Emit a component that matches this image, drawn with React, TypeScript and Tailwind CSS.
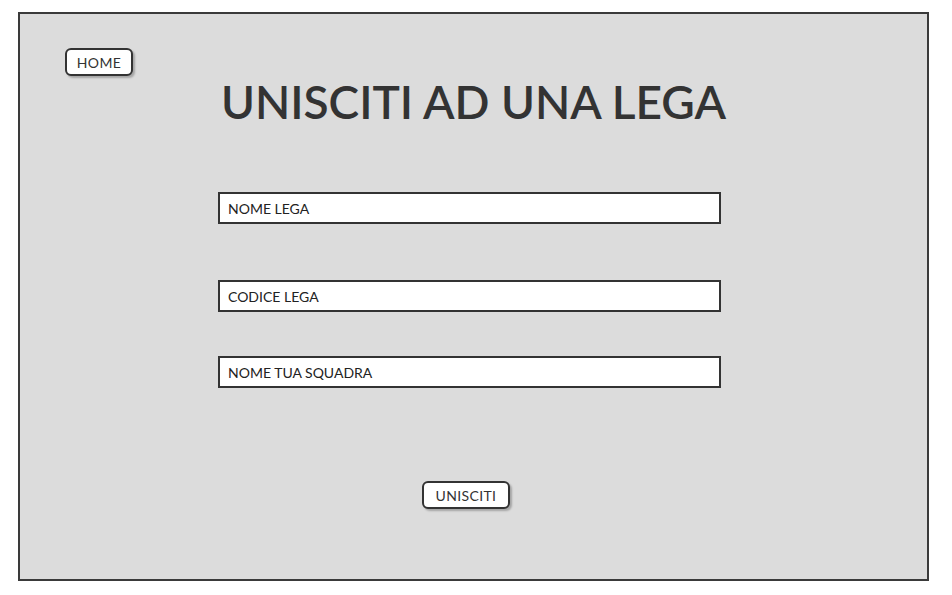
export default function App() {
  const font = { fontFamily: "Lato, 'Open Sans', sans-serif" };
  return (
    <div className="w-[952px] h-[595px] bg-white pt-[12px] pl-[18px]" style={font}>
      <div className="relative w-[911px] h-[569px] bg-[#dcdcdc] border-2 border-[#3a3a3a] flex flex-col">
        <div className="ml-[45px] mt-[34px] w-[68px] h-[28px] rounded-[6px] border-2 border-[#333] bg-white shadow-[2px_2px_2px_rgba(0,0,0,0.25)] flex items-center justify-center text-[14px] text-[#333] tracking-wide">
          HOME
        </div>
        <div className="mt-[2px] h-[48px] flex items-center justify-center text-[46px] leading-none text-[#333] font-semibold">
          UNISCITI AD UNA LEGA
        </div>
        <div className="ml-[198px] mt-[66px] w-[503px] h-[32px] border-2 border-[#333] bg-white flex items-center pl-[8px] text-[14px] text-[#222]">
          NOME LEGA
        </div>
        <div className="ml-[198px] mt-[56px] w-[503px] h-[32px] border-2 border-[#333] bg-white flex items-center pl-[8px] text-[14px] text-[#222]">
          CODICE LEGA
        </div>
        <div className="ml-[198px] mt-[44px] w-[503px] h-[32px] border-2 border-[#333] bg-white flex items-center pl-[8px] text-[14px] text-[#222]">
          NOME TUA SQUADRA
        </div>
        <div className="ml-[402px] mt-[93px] w-[88px] h-[28px] rounded-[6px] border-2 border-[#333] bg-white shadow-[2px_2px_2px_rgba(0,0,0,0.25)] flex items-center justify-center text-[14px] text-[#333] tracking-wide">
          UNISCITI
        </div>
      </div>
    </div>
  );
}
